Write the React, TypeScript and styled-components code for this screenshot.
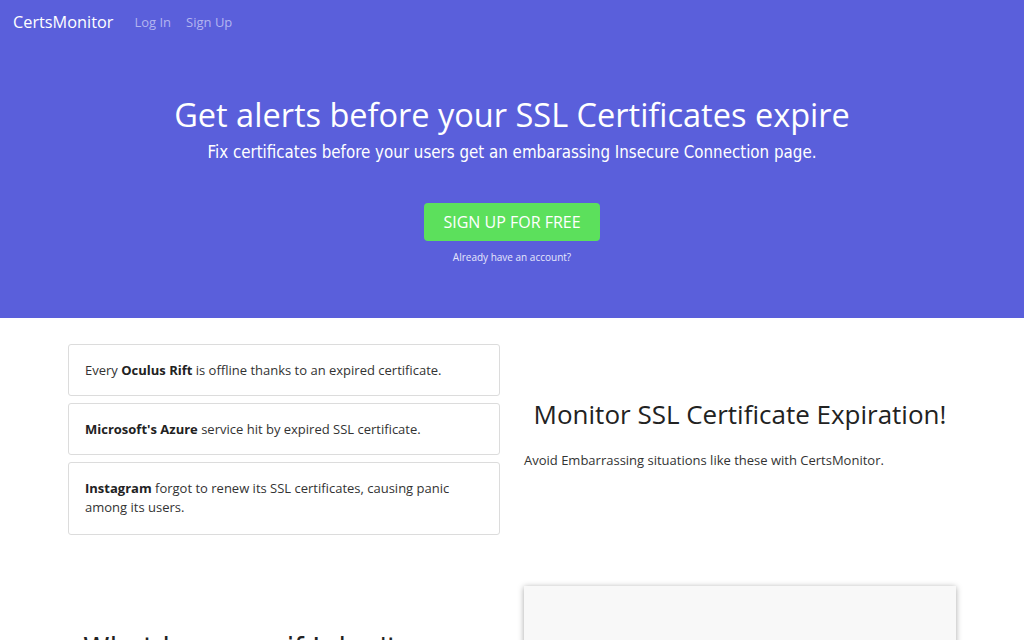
import React from 'react';
import styled, { createGlobalStyle } from 'styled-components';

const GlobalStyle = createGlobalStyle`
  html, body {
    margin: 0;
    padding: 0;
    background: #fff;
    font-family: "Open Sans", "Noto Sans", sans-serif;
    color: #222;
  }
  * { box-sizing: border-box; }
`;

const Page = styled.div`
  width: 100%;
  height: 640px;
  overflow: hidden;
`;

const Hero = styled.header`
  background-color: #5a5fdb;
  height: 318px;
  display: flex;
  flex-direction: column;
`;

const Navbar = styled.nav`
  display: flex;
  align-items: center;
  height: 44px;
  padding: 0 13px;
`;

const Brand = styled.a`
  color: #fff;
  font-size: 16.3px;
  text-decoration: none;
  margin-right: 21px;
`;

const NavLink = styled.a`
  color: #b3b5f0;
  font-size: 13px;
  text-decoration: none;
  margin-right: 15px;
`;

const HeroBody = styled.div`
  display: flex;
  flex-direction: column;
  align-items: center;
  padding-top: 49px;
  color: #fff;
`;

const HeroTitle = styled.h1`
  margin: 0;
  font-size: 32.5px;
  font-weight: 400;
  line-height: 44px;
`;

const HeroSub = styled.p`
  margin: 4px 0 0;
  font-family: "DejaVu Sans Condensed", "Open Sans", sans-serif;
  font-size: 16.8px;
  line-height: 22px;
`;

const SignUpButton = styled.a`
  margin-top: 40px;
  display: inline-flex;
  align-items: center;
  justify-content: center;
  width: 176px;
  height: 38px;
  border-radius: 4px;
  background: #5ce05c;
  color: #fff;
  font-size: 16px;
  text-transform: uppercase;
  text-decoration: none;
`;

const SmallLink = styled.a`
  margin-top: 9px;
  font-size: 10px;
  color: #e6e7fb;
  text-decoration: none;
`;

const Container = styled.main`
  width: 888px;
  margin: 0 auto;
`;

const Row = styled.section<{ $top: number }>`
  display: grid;
  grid-template-columns: 432px 432px;
  column-gap: 24px;
  margin-top: ${({ $top }) => $top}px;
`;

const CardList = styled.div`
  display: flex;
  flex-direction: column;
  gap: 7px;
`;

const NewsCard = styled.div`
  border: 1px solid #dcdcdc;
  border-radius: 3px;
  padding: 16px 16px 15px;
  font-size: 13px;
  line-height: 19px;
  color: #333;
  b { font-weight: 700; color: #222; }
  &:last-child { padding-bottom: 17px; }
`;

const Pitch = styled.div`
  padding-top: 54px;
`;

const PitchTitle = styled.h2`
  margin: 0;
  text-align: center;
  font-size: 26px;
  font-weight: 400;
  line-height: 32px;
  color: #222;
`;

const PitchText = styled.p`
  margin: 21px 0 0;
  font-size: 13px;
  color: #333;
`;

const FaqTitle = styled.h2`
  margin: 45px 0 0 15px;
  font-family: "DejaVu Sans Condensed", "Open Sans", sans-serif;
  font-size: 30px;
  font-weight: 400;
  color: #222;
`;

const Preview = styled.div`
  height: 200px;
  background: #f8f8f8;
  box-shadow: 0 1px 6px rgba(0, 0, 0, 0.35);
`;

const stories = [
  { lead: 'Every ', bold: 'Oculus Rift', rest: ' is offline thanks to an expired certificate.' },
  { lead: '', bold: "Microsoft's Azure", rest: ' service hit by expired SSL certificate.' },
  { lead: '', bold: 'Instagram', rest: ' forgot to renew its SSL certificates, causing panic among its users.' },
];

export default function App() {
  return (
    <Page>
      <GlobalStyle />
      <Hero>
        <Navbar>
          <Brand href="#">CertsMonitor</Brand>
          <NavLink href="#">Log In</NavLink>
          <NavLink href="#">Sign Up</NavLink>
        </Navbar>
        <HeroBody>
          <HeroTitle>Get alerts before your SSL Certificates expire</HeroTitle>
          <HeroSub>Fix certificates before your users get an embarassing Insecure Connection page.</HeroSub>
          <SignUpButton href="#">Sign up for free</SignUpButton>
          <SmallLink href="#">Already have an account?</SmallLink>
        </HeroBody>
      </Hero>
      <Container>
        <Row $top={26}>
          <CardList>
            {stories.map((s) => (
              <NewsCard key={s.bold}>
                {s.lead}
                <b>{s.bold}</b>
                {s.rest}
              </NewsCard>
            ))}
          </CardList>
          <Pitch>
            <PitchTitle>Monitor SSL Certificate Expiration!</PitchTitle>
            <PitchText>Avoid Embarrassing situations like these with CertsMonitor.</PitchText>
          </Pitch>
        </Row>
        <Row $top={51}>
          <FaqTitle>What happens if I don't renew?</FaqTitle>
          <Preview />
        </Row>
      </Container>
    </Page>
  );
}
